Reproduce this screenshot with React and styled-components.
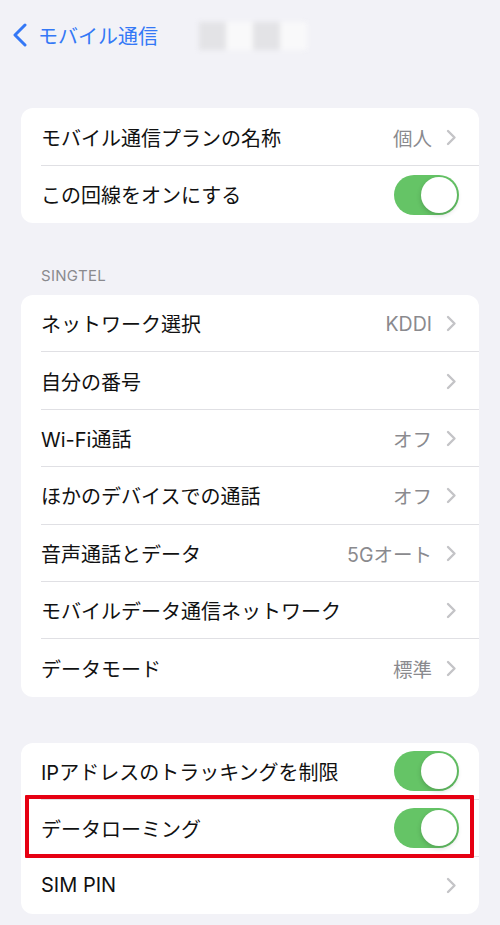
import React from "react";
import styled, { createGlobalStyle } from "styled-components";

const GlobalStyle = createGlobalStyle`
  body {
    margin: 0;
    background: #f2f2f7;
    font-family: Inter, "Noto Sans CJK JP", sans-serif;
    -webkit-font-smoothing: antialiased;
  }
`;

const Page = styled.div`
  width: 500px;
  height: 925px;
  overflow: hidden;
  background: #f2f2f7;
  display: flex;
  flex-direction: column;
`;

const NavBar = styled.div`
  height: 70px;
  margin-bottom: 38px;
  display: flex;
  align-items: center;
  padding-left: 12px;
`;

const BackButton = styled.div`
  display: flex;
  align-items: center;
  gap: 10px;
  color: #3478f6;
  font-size: 20px;
  font-family: "Noto Sans CJK JP", sans-serif;
`;

const Blurred = styled.div`
  display: flex;
  margin-left: 41px;
  margin-top: 2px;
  filter: blur(2.5px);
`;

const BlurCell = styled.div`
  width: 27px;
  height: 28px;
  background: ${(p) => (p.$light ? "#f9f9fa" : "#e3e3e6")};
`;

const SectionHeader = styled.div`
  padding: 43px 0 10px 41px;
  font-size: 15px;
  line-height: 19px;
  color: #8a8a8e;
  letter-spacing: 0.3px;
`;

const Card = styled.div`
  margin: ${(p) => p.$mt || 0}px 21px 0 21px;
  background: #fff;
  border-radius: 12px;
`;

const Row = styled.div`
  position: relative;
  height: ${(p) => p.$h || 57.4}px;
  display: flex;
  align-items: center;
  padding: 0 20px;
  &:not(:last-child)::after {
    content: "";
    position: absolute;
    left: 20px;
    right: 0;
    bottom: 0;
    height: 1px;
    background: #e0e0e4;
  }
`;

const Label = styled.span`
  flex: 1;
  font-size: 20px;
  color: #111;
`;

const Value = styled.span`
  font-size: 19.5px;
  color: #8a8a8e;
  margin-right: 14px;
`;

const Toggle = styled.div`
  width: 65px;
  height: 40px;
  border-radius: 20px;
  background: #65c466;
  position: relative;
  &::after {
    content: "";
    position: absolute;
    top: 2px;
    right: 2px;
    width: 36px;
    height: 36px;
    border-radius: 50%;
    background: #fff;
    box-shadow: 0 2px 5px rgba(0, 0, 0, 0.18);
  }
`;

const Highlight = styled.div`
  position: absolute;
  top: -5px;
  left: 4px;
  right: 5px;
  bottom: -1px;
  border: 4px solid #e60012;
  border-radius: 1px;
  pointer-events: none;
  z-index: 2;
`;

const Chevron = () => (
  <svg width="11" height="17" viewBox="0 0 11 17" style={{ marginRight: 2 }}>
    <path d="M2 2 L8.5 8.5 L2 15" fill="none" stroke="#c4c4c7" strokeWidth="2.4" strokeLinecap="round" strokeLinejoin="round" />
  </svg>
);

const BackChevron = () => (
  <svg width="16" height="24" viewBox="0 0 16 24">
    <path d="M13 2 L3 12 L13 22" fill="none" stroke="#3478f6" strokeWidth="3" strokeLinecap="round" strokeLinejoin="round" />
  </svg>
);

function LinkRow({ label, value, h }) {
  return (
    <Row $h={h}>
      <Label>{label}</Label>
      {value && <Value>{value}</Value>}
      <Chevron />
    </Row>
  );
}

function ToggleRow({ label, h, highlighted }) {
  return (
    <Row $h={h}>
      <Label>{label}</Label>
      <Toggle />
      {highlighted && <Highlight />}
    </Row>
  );
}

export default function App() {
  return (
    <Page>
      <GlobalStyle />
      <NavBar>
        <BackButton>
          <BackChevron />
          <span>モバイル通信</span>
        </BackButton>
        <Blurred>
          <BlurCell />
          <BlurCell $light />
          <BlurCell />
          <BlurCell $light />
        </Blurred>
      </NavBar>

      <Card>
        <LinkRow h={58} label="モバイル通信プランの名称" value="個人" />
        <ToggleRow h={57} label="この回線をオンにする" />
      </Card>

      <SectionHeader>SINGTEL</SectionHeader>
      <Card>
        <LinkRow label="ネットワーク選択" value="KDDI" />
        <LinkRow label="自分の番号" />
        <LinkRow label="Wi-Fi通話" value="オフ" />
        <LinkRow label="ほかのデバイスでの通話" value="オフ" />
        <LinkRow label="音声通話とデータ" value="5Gオート" />
        <LinkRow label="モバイルデータ通信ネットワーク" />
        <LinkRow label="データモード" value="標準" />
      </Card>

      <Card $mt={46}>
        <ToggleRow h={57} label="IPアドレスのトラッキングを制限" />
        <ToggleRow h={57} label="データローミング" highlighted />
        <LinkRow h={57} label="SIM PIN" />
      </Card>
    </Page>
  );
}
